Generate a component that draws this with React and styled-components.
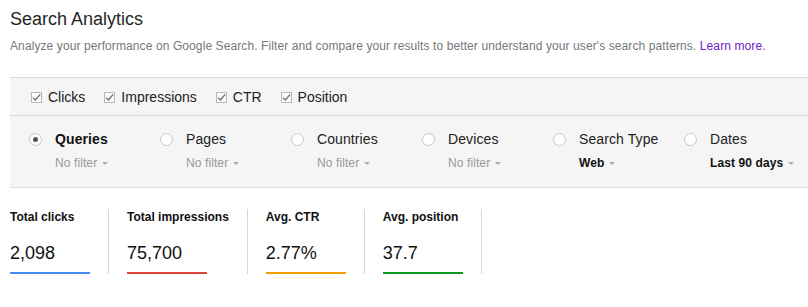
import React from "react";
import styled, { createGlobalStyle } from "styled-components";

const Global = createGlobalStyle`
  html, body { margin: 0; padding: 0; background: #fff; }
  body { font-family: "Liberation Sans", Arial, sans-serif; color: #222; }
`;

const Page = styled.div`
  padding: 8px 0 0 10px;
`;

const Title = styled.h1`
  margin: 0;
  font-size: 18px;
  line-height: 22px;
  font-weight: normal;
  color: #262626;
`;

const Description = styled.p`
  margin: 8px 0 0;
  font-size: 12px;
  line-height: 16px;
  letter-spacing: 0.1px;
  color: #777;
`;

const Link = styled.a`
  color: #6d22cc;
  text-decoration: none;
`;

const Panel = styled.div`
  margin-top: 23px;
  background: #f5f5f5;
  border-top: 1px solid #d9d9d9;
  border-bottom: 1px solid #dedede;
`;

const CheckRow = styled.div`
  display: flex;
  align-items: center;
  gap: 19px;
  padding: 9px 0 8px 21px;
  border-bottom: 1px solid #d9d9d9;
`;

const CheckItem = styled.label`
  display: flex;
  align-items: center;
  gap: 6px;
  font-size: 14px;
  line-height: 20px;
  color: #222;
`;

const Box = styled.span`
  display: inline-flex;
  align-items: center;
  justify-content: center;
  width: 11px;
  height: 11px;
  box-sizing: border-box;
  border: 1px solid #b8b8b8;
  background: #fbfbfb;
`;

const RadioRow = styled.div`
  display: flex;
  padding: 13px 0 16px 19px;
`;

const RadioCol = styled.div`
  width: 131px;
  flex: none;
  display: grid;
  grid-template-columns: 26px auto;
  align-items: center;
`;

const Circle = styled.span`
  width: 13px;
  height: 13px;
  box-sizing: border-box;
  border-radius: 50%;
  border: 1px solid #c8c8c8;
  background: #fff;
  display: flex;
  align-items: center;
  justify-content: center;
  &::after {
    content: "";
    width: 5px;
    height: 5px;
    border-radius: 50%;
    background: ${(p) => (p.$checked ? "#555" : "transparent")};
  }
`;

const RadioLabel = styled.span`
  font-size: 14px;
  line-height: 20px;
  letter-spacing: 0.1px;
  font-weight: ${(p) => (p.$checked ? "bold" : "normal")};
  color: ${(p) => (p.$checked ? "#111" : "#222")};
`;

const Filter = styled.span`
  grid-column: 2;
  margin-top: 6px;
  display: flex;
  align-items: center;
  gap: 5px;
  font-size: 12px;
  line-height: 16px;
  letter-spacing: 0.1px;
  font-weight: ${(p) => (p.$strong ? "bold" : "normal")};
  color: ${(p) => (p.$strong ? "#111" : "#999")};
  &::after {
    content: "";
    width: 0;
    height: 0;
    margin-top: 1px;
    border-left: 3px solid transparent;
    border-right: 3px solid transparent;
    border-top: 3px solid #aaa;
  }
`;

const Metrics = styled.div`
  display: flex;
  margin-top: 21px;
`;

const Metric = styled.div`
  display: flex;
  flex-direction: column;
  align-items: flex-start;
  padding: 0 18px;
  border-right: 1px solid #d6d6d6;
  &:first-child {
    padding-left: 0;
  }
`;

const MetricLabel = styled.div`
  font-size: 12px;
  line-height: 16px;
  font-weight: bold;
  color: #111;
`;

const MetricValue = styled.div`
  margin-top: 16px;
  width: 80px;
  padding-bottom: 7px;
  font-size: 18px;
  line-height: 24px;
  color: #111;
  border-bottom: 2px solid ${(p) => p.$color};
`;

const Check = () => (
  <svg width="9" height="9" viewBox="0 0 9 9">
    <path d="M1 4.6 L3.4 7 L8.2 1.4" fill="none" stroke="#6f6f6f" strokeWidth="1.3" />
  </svg>
);

const checks = ["Clicks", "Impressions", "CTR", "Position"];

const radios = [
  { label: "Queries", filter: "No filter", checked: true },
  { label: "Pages", filter: "No filter" },
  { label: "Countries", filter: "No filter" },
  { label: "Devices", filter: "No filter" },
  { label: "Search Type", filter: "Web", strong: true },
  { label: "Dates", filter: "Last 90 days", strong: true },
];

const metrics = [
  { label: "Total clicks", value: "2,098", color: "#4a8af4" },
  { label: "Total impressions", value: "75,700", color: "#dc4437" },
  { label: "Avg. CTR", value: "2.77%", color: "#f59c00" },
  { label: "Avg. position", value: "37.7", color: "#0b9a1c" },
];

export default function App() {
  return (
    <>
      <Global />
      <Page>
        <Title>Search Analytics</Title>
        <Description>
          Analyze your performance on Google Search. Filter and compare your results to better understand your user's search patterns.{" "}
          <Link href="#">Learn more.</Link>
        </Description>
        <Panel>
          <CheckRow>
            {checks.map((c) => (
              <CheckItem key={c}>
                <Box>
                  <Check />
                </Box>
                {c}
              </CheckItem>
            ))}
          </CheckRow>
          <RadioRow>
            {radios.map((r) => (
              <RadioCol key={r.label}>
                <Circle $checked={r.checked} />
                <RadioLabel $checked={r.checked}>{r.label}</RadioLabel>
                <Filter $strong={r.strong}>{r.filter}</Filter>
              </RadioCol>
            ))}
          </RadioRow>
        </Panel>
        <Metrics>
          {metrics.map((m) => (
            <Metric key={m.label}>
              <MetricLabel>{m.label}</MetricLabel>
              <MetricValue $color={m.color}>{m.value}</MetricValue>
            </Metric>
          ))}
        </Metrics>
      </Page>
    </>
  );
}
